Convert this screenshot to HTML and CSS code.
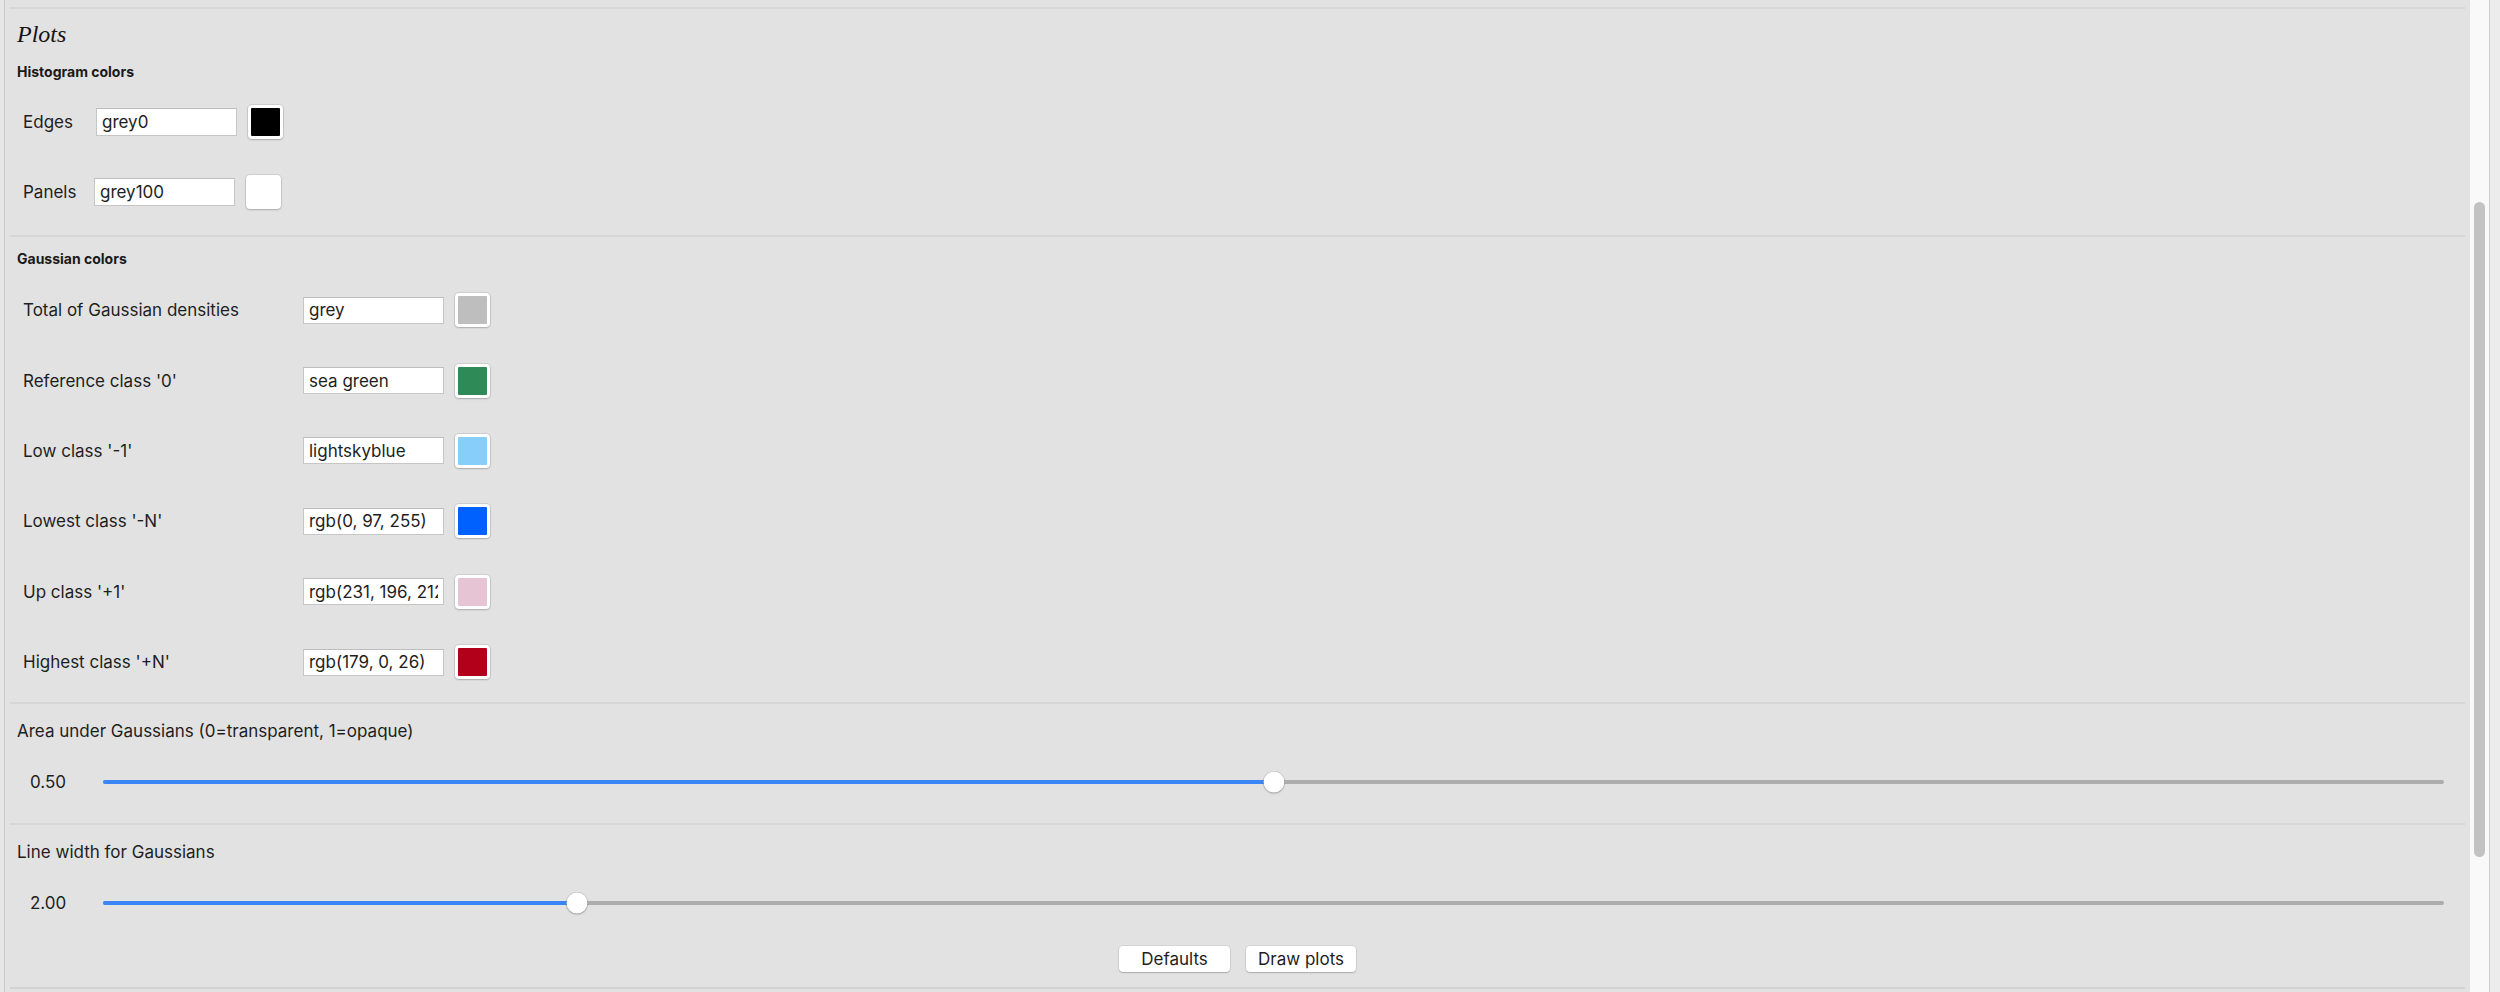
FILE: index.html
```html
<!DOCTYPE html>
<html>
<head>
<meta charset="utf-8">
<title>Plots</title>
<link rel="stylesheet" href="styles.css">
</head>
<body>
<div class="app">
  <div class="edge-left"></div>
  <div class="main">
    <div class="sep sep-top"></div>
    <h1 class="title">Plots</h1>
    <div class="subhead subhead-hist">Histogram colors</div>
    <div class="rows rows-hist">
      <div class="row">
        <span class="label label-hist">Edges</span>
        <input class="field" type="text" value="grey0">
        <span class="swatch"><span class="chip" style="background:#000000"></span></span>
      </div>
      <div class="row">
        <span class="label label-hist label-panels">Panels</span>
        <input class="field" type="text" value="grey100">
        <span class="swatch"><span class="chip" style="background:#ffffff"></span></span>
      </div>
    </div>
    <div class="sep sep-mid"></div>
    <div class="subhead subhead-gauss">Gaussian colors</div>
    <div class="rows rows-gauss">
      <div class="row grow">
        <span class="label label-gauss">Total of Gaussian densities</span>
        <input class="field" type="text" value="grey">
        <span class="swatch"><span class="chip" style="background:#bebebe"></span></span>
      </div>
      <div class="row grow">
        <span class="label label-gauss">Reference class '0'</span>
        <input class="field" type="text" value="sea green">
        <span class="swatch"><span class="chip" style="background:#2e8b57"></span></span>
      </div>
      <div class="row grow">
        <span class="label label-gauss">Low class '-1'</span>
        <input class="field" type="text" value="lightskyblue">
        <span class="swatch"><span class="chip" style="background:#87cefa"></span></span>
      </div>
      <div class="row grow">
        <span class="label label-gauss">Lowest class '-N'</span>
        <input class="field" type="text" value="rgb(0, 97, 255)">
        <span class="swatch"><span class="chip" style="background:rgb(0,97,255)"></span></span>
      </div>
      <div class="row grow">
        <span class="label label-gauss">Up class '+1'</span>
        <input class="field" type="text" value="rgb(231, 196, 212)">
        <span class="swatch"><span class="chip" style="background:rgb(231,196,212)"></span></span>
      </div>
      <div class="row grow">
        <span class="label label-gauss">Highest class '+N'</span>
        <input class="field" type="text" value="rgb(179, 0, 26)">
        <span class="swatch"><span class="chip" style="background:rgb(179,0,26)"></span></span>
      </div>
    </div>
    <div class="sep sep-low"></div>
    <div class="slider-block">
      <div class="slider-label">Area under Gaussians (0=transparent, 1=opaque)</div>
      <div class="slider-row">
        <span class="slider-value">0.50</span>
        <div class="track">
          <div class="fill" style="width:50%"></div>
          <div class="thumb" style="left:50%"></div>
        </div>
      </div>
    </div>
    <div class="sep sep-slider"></div>
    <div class="slider-block">
      <div class="slider-label">Line width for Gaussians</div>
      <div class="slider-row">
        <span class="slider-value">2.00</span>
        <div class="track">
          <div class="fill" style="width:20.25%"></div>
          <div class="thumb" style="left:20.25%"></div>
        </div>
      </div>
    </div>
    <div class="buttons">
      <button class="btn" type="button">Defaults</button>
      <button class="btn" type="button">Draw plots</button>
    </div>
    <div class="sep sep-bottom"></div>
  </div>
  <div class="scroll">
    <div class="scroll-thumb"></div>
  </div>
  <div class="edge-right"></div>
</div>
</body>
</html>
```
FILE: styles.css
```css
* { box-sizing: border-box; }

html, body {
  margin: 0;
  padding: 0;
  background: #e2e2e2;
}

body {
  font-family: Inter, "Liberation Sans", Arial, sans-serif;
  font-size: 17px;
  color: #1e1e1e;
}

.app {
  display: flex;
  width: 2500px;
  height: 992px;
  overflow: hidden;
}

.edge-left {
  width: 5px;
  flex: none;
  background: #e6e6e6;
  border-right: 1px solid #cbcbcb;
}

.main {
  flex: 1;
  min-width: 0;
  padding: 7px 5px 0 5px;
  display: flex;
  flex-direction: column;
}

.sep {
  height: 2px;
  background: #d6d6d6;
  flex: none;
}

.title {
  margin: 11px 0 0 7px;
  font-family: "Liberation Serif", "Times New Roman", serif;
  font-style: italic;
  font-weight: normal;
  font-size: 24px;
  line-height: 28px;
  color: #141414;
}

.subhead {
  margin-left: 7px;
  font-weight: 700;
  font-size: 14px;
  line-height: 16px;
  color: #1a1a1a;
}

.subhead-hist { margin-top: 16px; }
.subhead-gauss { margin-top: 14px; }

.rows { display: flex; flex-direction: column; }
.rows-hist { margin-top: 7px; }
.rows-gauss { margin-top: 8px; }

.row {
  display: flex;
  align-items: center;
  height: 70px;
  padding-left: 13px;
}

.row.grow { height: 70.4px; }

.label { flex: none; }
.label-hist { width: 73px; }
.label-panels { width: 71px; }
.label-gauss { width: 280px; }

.field {
  flex: none;
  width: 141px;
  height: 28px;
  margin: 0;
  padding: 0 5px;
  border: 1px solid #c6c6c6;
  border-top-color: #bdbdbd;
  background: #ffffff;
  font-family: inherit;
  font-size: 17px;
  color: #1e1e1e;
  outline: none;
}

.rows-gauss .field { height: 27px; }

.swatch {
  flex: none;
  margin-left: 11px;
  width: 35px;
  height: 34px;
  padding: 3px;
  background: #ffffff;
  border-radius: 4px;
  box-shadow: 0 0 0 1px rgba(0, 0, 0, 0.08), 0 1px 2px rgba(0, 0, 0, 0.18);
  display: flex;
}

.chip {
  flex: 1;
  border-radius: 1px;
}

.sep-mid { margin-top: 8px; }
.sep-low { margin-top: 5px; }
.sep-slider { margin-top: 26px; }

.slider-block {
  padding: 17px 21px 0 7px;
}

.slider-label {
  line-height: 20px;
}

.slider-row {
  display: flex;
  align-items: center;
  height: 30px;
  margin-top: 26px;
  padding-left: 13px;
}

.slider-value {
  flex: none;
  width: 73px;
  line-height: 20px;
}

.track {
  position: relative;
  flex: 1;
  height: 4px;
  border-radius: 2px;
  background: #adadad;
}

.fill {
  height: 4px;
  border-radius: 2px;
  background: #3a86f7;
}

.thumb {
  position: absolute;
  top: 50%;
  width: 21px;
  height: 21px;
  border-radius: 50%;
  background: #ffffff;
  box-shadow: 0 0 0 0.5px rgba(0, 0, 0, 0.15), 0 1px 2px rgba(0, 0, 0, 0.25);
  transform: translate(-50%, -50%);
}

.buttons {
  display: flex;
  justify-content: center;
  gap: 16px;
  margin-top: 28px;
}

.btn {
  height: 26px;
  width: 111px;
  padding: 0;
  border: none;
  border-radius: 4px;
  background: #ffffff;
  box-shadow: 0 0 0 0.5px rgba(0, 0, 0, 0.12), 0 1px 1.5px rgba(0, 0, 0, 0.2);
  font-family: inherit;
  font-size: 17px;
  color: #1e1e1e;
}

.btn + .btn { width: 110px; }

.sep-bottom {
  margin-top: 15px;
  background: #d2d2d2;
}

.scroll {
  flex: none;
  width: 19px;
  background: #f9f9f9;
  padding: 202px 0 0 4px;
}

.scroll-thumb {
  width: 11px;
  height: 655px;
  border-radius: 6px;
  background: #c2c2c2;
}

.edge-right {
  flex: none;
  width: 11px;
  background: #ececec;
  border-left: 1px solid #cfcfcf;
}
```
